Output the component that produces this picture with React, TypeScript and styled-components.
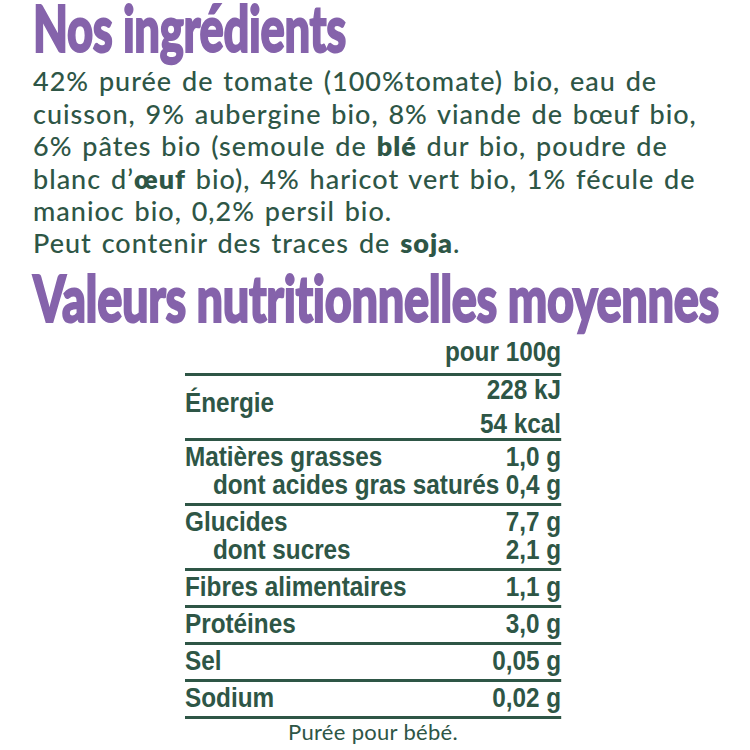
import { Fragment } from 'react'
import styled, { createGlobalStyle } from 'styled-components'

const GREEN = '#2e5646'
const PURPLE = '#8563ab'

const GlobalStyle = createGlobalStyle`
  html, body {
    margin: 0;
    padding: 0;
    background: #ffffff;
    overflow-x: hidden;
  }
`

const Page = styled.div`
  width: 750px;
  height: 750px;
  box-sizing: border-box;
  padding-left: 33px;
  color: ${GREEN};
  font-family: Lato, 'Noto Sans', sans-serif;
  overflow: hidden;
`

// condensed display face: a heavy sans squeezed horizontally
const Heading = styled.h1<{ $size: number; $scale: number; $gap: number }>`
  margin: ${(p) => p.$gap}px 0 0;
  font-family: Lato, 'DejaVu Sans', sans-serif;
  font-weight: 900;
  font-size: ${(p) => p.$size}px;
  line-height: 54px;
  color: ${PURPLE};
  -webkit-text-stroke: 2px ${PURPLE};
  white-space: nowrap;
  letter-spacing: -0.5px;
  transform: scaleX(${(p) => p.$scale});
  transform-origin: left center;
`

const Ingredients = styled.p`
  margin: 11.4px 0 0;
  font-size: 27px;
  line-height: 32.4px;
  font-weight: 500;
  letter-spacing: 1px;
  word-spacing: 2px;
  white-space: nowrap;
`

const Allergen = styled.b`
  font-weight: 800;
`

// Helvetica-condensed look: Arial metrics narrowed to 90%
const Table = styled.div`
  width: 417.8px;
  margin: 13.5px 0 0 152px;
  font-family: 'Liberation Sans', Arial, sans-serif;
  font-weight: 700;
  font-size: 27px;
  line-height: 28px;
  white-space: nowrap;
  transform: scaleX(0.9);
  transform-origin: left top;
`

const TableHead = styled.div`
  text-align: right;
  padding-bottom: 6.3px;
  border-bottom: 3px solid ${GREEN};
`

const Row = styled.div<{ $tight?: boolean }>`
  display: grid;
  grid-template-columns: 1fr auto;
  align-items: center;
  padding: ${(p) => (p.$tight ? '0' : '2px 0 4px')};
  border-bottom: 3px solid ${GREEN};
`

const Label = styled.div<{ $sub?: boolean; $lift?: boolean }>`
  padding-left: ${(p) => (p.$sub ? 31 : 0)}px;
  padding-bottom: ${(p) => (p.$lift ? 8 : 0)}px;
`

const Value = styled.div`
  text-align: right;
`

const Values = styled.div`
  display: flex;
  flex-direction: column;
  align-items: flex-end;
  gap: 6px;
`

const Footnote = styled.div`
  width: 376px;
  margin-left: 152px;
  text-align: center;
  font-size: 22px;
  line-height: 26px;
  letter-spacing: 0.3px;
`

type Line = { label: string; value: string; sub?: boolean }

const nutrients: Line[][] = [
  [
    { label: 'Matières grasses', value: '1,0 g' },
    { label: 'dont acides gras saturés', value: '0,4 g', sub: true },
  ],
  [
    { label: 'Glucides', value: '7,7 g' },
    { label: 'dont sucres', value: '2,1 g', sub: true },
  ],
  [{ label: 'Fibres alimentaires', value: '1,1 g' }],
  [{ label: 'Protéines', value: '3,0 g' }],
  [{ label: 'Sel', value: '0,05 g' }],
  [{ label: 'Sodium', value: '0,02 g' }],
]

export default function App() {
  return (
    <Page>
      <GlobalStyle />
      <Heading $size={65} $scale={0.697} $gap={0}>
        Nos ingrédients
      </Heading>
      <Ingredients>
        42% purée de tomate (100%tomate) bio, eau de
        <br />
        cuisson, 9% aubergine bio, 8% viande de bœuf bio,
        <br />
        6% pâtes bio (semoule de <Allergen>blé</Allergen> dur bio, poudre de
        <br />
        blanc d’<Allergen>œuf</Allergen> bio), 4% haricot vert bio, 1% fécule de
        <br />
        manioc bio, 0,2% persil bio.
        <br />
        Peut contenir des traces de <Allergen>soja</Allergen>.
      </Ingredients>
      <Heading as="h2" $size={64} $scale={0.733} $gap={11}>
        Valeurs nutritionnelles moyennes
      </Heading>
      <Table>
        <TableHead>pour 100g</TableHead>
        <Row $tight>
          <Label $lift>Énergie</Label>
          <Values>
            <Value>228 kJ</Value>
            <Value>54 kcal</Value>
          </Values>
        </Row>
        {nutrients.map((group) => (
          <Row key={group[0].label}>
            {group.map((line) => (
              <Fragment key={line.label}>
                <Label $sub={line.sub}>{line.label}</Label>
                <Value>{line.value}</Value>
              </Fragment>
            ))}
          </Row>
        ))}
      </Table>
      <Footnote>Purée pour bébé.</Footnote>
    </Page>
  )
}
